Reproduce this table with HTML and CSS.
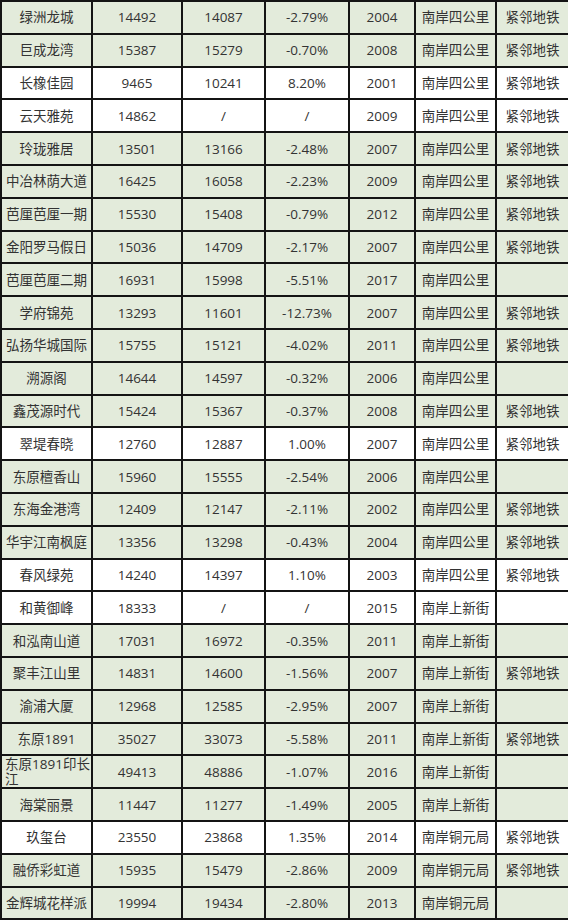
FILE: index.html
```html
<!DOCTYPE html>
<html lang="zh">
<head>
<meta charset="utf-8">
<title>南岸楼盘价格表</title>
<link rel="stylesheet" href="styles.css">
</head>
<body>
<table class="price-table">
<colgroup>
<col class="c-name"><col class="c-p1"><col class="c-p2"><col class="c-pct"><col class="c-year"><col class="c-area"><col class="c-metro">
</colgroup>
<tbody>
<tr class="g"><td>绿洲龙城</td><td>14492</td><td>14087</td><td>-2.79%</td><td>2004</td><td>南岸四公里</td><td>紧邻地铁</td></tr>
<tr class="g"><td>巨成龙湾</td><td>15387</td><td>15279</td><td>-0.70%</td><td>2008</td><td>南岸四公里</td><td>紧邻地铁</td></tr>
<tr class="w"><td>长橡佳园</td><td>9465</td><td>10241</td><td>8.20%</td><td>2001</td><td>南岸四公里</td><td>紧邻地铁</td></tr>
<tr class="w"><td>云天雅苑</td><td>14862</td><td>/</td><td>/</td><td>2009</td><td>南岸四公里</td><td>紧邻地铁</td></tr>
<tr class="g"><td>玲珑雅居</td><td>13501</td><td>13166</td><td>-2.48%</td><td>2007</td><td>南岸四公里</td><td>紧邻地铁</td></tr>
<tr class="g"><td>中冶林荫大道</td><td>16425</td><td>16058</td><td>-2.23%</td><td>2009</td><td>南岸四公里</td><td>紧邻地铁</td></tr>
<tr class="g"><td>芭厘芭厘一期</td><td>15530</td><td>15408</td><td>-0.79%</td><td>2012</td><td>南岸四公里</td><td>紧邻地铁</td></tr>
<tr class="g"><td>金阳罗马假日</td><td>15036</td><td>14709</td><td>-2.17%</td><td>2007</td><td>南岸四公里</td><td>紧邻地铁</td></tr>
<tr class="g"><td>芭厘芭厘二期</td><td>16931</td><td>15998</td><td>-5.51%</td><td>2017</td><td>南岸四公里</td><td></td></tr>
<tr class="g"><td>学府锦苑</td><td>13293</td><td>11601</td><td>-12.73%</td><td>2007</td><td>南岸四公里</td><td>紧邻地铁</td></tr>
<tr class="g"><td>弘扬华城国际</td><td>15755</td><td>15121</td><td>-4.02%</td><td>2011</td><td>南岸四公里</td><td>紧邻地铁</td></tr>
<tr class="g"><td>溯源阁</td><td>14644</td><td>14597</td><td>-0.32%</td><td>2006</td><td>南岸四公里</td><td></td></tr>
<tr class="g"><td>鑫茂源时代</td><td>15424</td><td>15367</td><td>-0.37%</td><td>2008</td><td>南岸四公里</td><td>紧邻地铁</td></tr>
<tr class="w"><td>翠堤春晓</td><td>12760</td><td>12887</td><td>1.00%</td><td>2007</td><td>南岸四公里</td><td>紧邻地铁</td></tr>
<tr class="g"><td>东原檀香山</td><td>15960</td><td>15555</td><td>-2.54%</td><td>2006</td><td>南岸四公里</td><td></td></tr>
<tr class="g"><td>东海金港湾</td><td>12409</td><td>12147</td><td>-2.11%</td><td>2002</td><td>南岸四公里</td><td>紧邻地铁</td></tr>
<tr class="g"><td>华宇江南枫庭</td><td>13356</td><td>13298</td><td>-0.43%</td><td>2004</td><td>南岸四公里</td><td>紧邻地铁</td></tr>
<tr class="w"><td>春风绿苑</td><td>14240</td><td>14397</td><td>1.10%</td><td>2003</td><td>南岸四公里</td><td>紧邻地铁</td></tr>
<tr class="w"><td>和黄御峰</td><td>18333</td><td>/</td><td>/</td><td>2015</td><td>南岸上新街</td><td></td></tr>
<tr class="g"><td>和泓南山道</td><td>17031</td><td>16972</td><td>-0.35%</td><td>2011</td><td>南岸上新街</td><td></td></tr>
<tr class="g"><td>聚丰江山里</td><td>14831</td><td>14600</td><td>-1.56%</td><td>2007</td><td>南岸上新街</td><td>紧邻地铁</td></tr>
<tr class="g"><td>渝浦大厦</td><td>12968</td><td>12585</td><td>-2.95%</td><td>2007</td><td>南岸上新街</td><td></td></tr>
<tr class="g"><td>东原1891</td><td>35027</td><td>33073</td><td>-5.58%</td><td>2011</td><td>南岸上新街</td><td>紧邻地铁</td></tr>
<tr class="g"><td class="wrap">东原1891印长江</td><td>49413</td><td>48886</td><td>-1.07%</td><td>2016</td><td>南岸上新街</td><td></td></tr>
<tr class="g"><td>海棠丽景</td><td>11447</td><td>11277</td><td>-1.49%</td><td>2005</td><td>南岸上新街</td><td></td></tr>
<tr class="w"><td>玖玺台</td><td>23550</td><td>23868</td><td>1.35%</td><td>2014</td><td>南岸铜元局</td><td>紧邻地铁</td></tr>
<tr class="g"><td>融侨彩虹道</td><td>15935</td><td>15479</td><td>-2.86%</td><td>2009</td><td>南岸铜元局</td><td>紧邻地铁</td></tr>
<tr class="g"><td>金辉城花样派</td><td>19994</td><td>19434</td><td>-2.80%</td><td>2013</td><td>南岸铜元局</td><td></td></tr>
</tbody>
</table>
</body>
</html>
```
FILE: styles.css
```css
html, body {
  margin: 0;
  padding: 0;
  background: #ffffff;
}

.price-table {
  width: 568px;
  table-layout: fixed;
  border-collapse: collapse;
  font-family: "Open Sans", "Noto Sans CJK SC", sans-serif;
  font-size: 13.5px;
  color: #333333;
}

.c-name { width: 91px; }
.c-p1 { width: 90px; }
.c-p2 { width: 83px; }
.c-pct { width: 84px; }
.c-year { width: 66px; }
.c-area { width: 81px; }
.c-metro { width: 73px; }

.price-table td {
  border: 2px solid #141414;
  height: 32.8px;
  padding: 0 2px;
  box-sizing: border-box;
  text-align: center;
  vertical-align: middle;
  line-height: 16px;
  white-space: nowrap;
  overflow: hidden;
}

.price-table tr.g td {
  background: #e3ebdb;
}

.price-table tr.w td {
  background: #ffffff;
}

.price-table td.wrap {
  white-space: normal;
  text-align: left;
  line-height: 15px;
  padding: 0 1px 0 3px;
  word-break: break-all;
}
```
